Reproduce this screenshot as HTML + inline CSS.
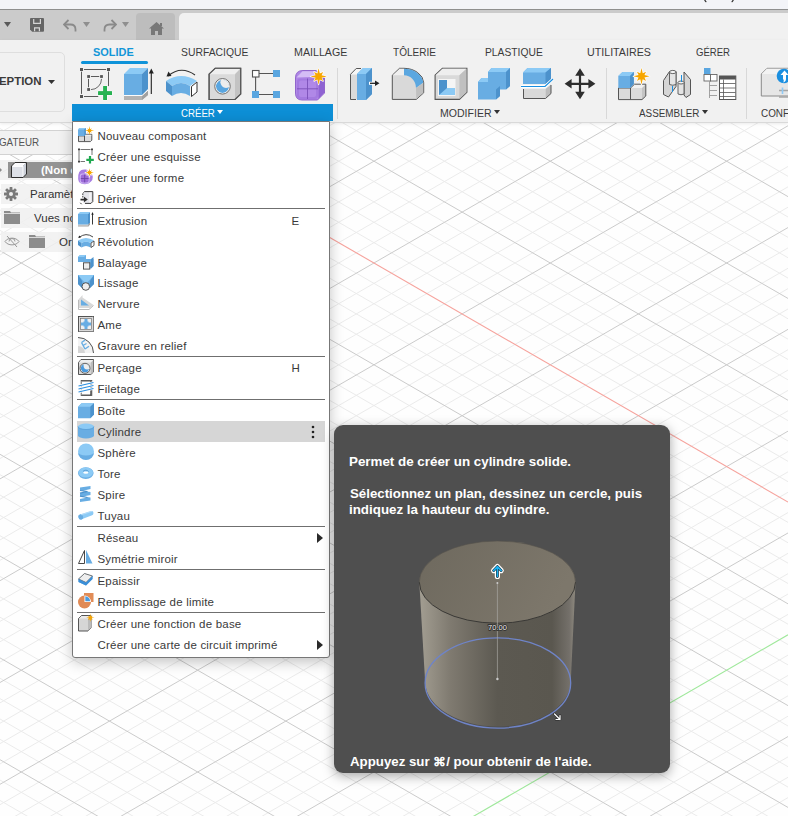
<!DOCTYPE html>
<html><head><meta charset="utf-8"><style>
*{margin:0;padding:0;box-sizing:border-box}
html,body{width:788px;height:816px;overflow:hidden;background:#fefefe;font-family:"Liberation Sans",sans-serif;position:relative}
.a{position:absolute}
#topstrip{left:0;top:0;width:788px;height:9px;background:#f3f4f8;overflow:hidden}
#topline{left:0;top:9px;width:788px;height:1px;background:#8f8f8f}
#toolbar{left:0;top:10px;width:788px;height:30px;background:#cbcbcb}
#hometab{left:136px;top:13px;width:39px;height:27px;background:#bdbdbd;border-radius:4px 4px 0 0}
#doctab{left:179px;top:13px;width:620px;height:27px;background:#f1f1f1;border-radius:5px 0 0 0}
#ribbon{left:0;top:40px;width:788px;height:83px;background:#f1f1f1;border-bottom:1px solid #d9d9d9;box-shadow:0 1px 3px rgba(0,0,0,0.08)}
.tab{position:absolute;top:47px;font-size:11.5px;color:#3c3c3c;white-space:nowrap;line-height:12px;transform-origin:0 0}
.sep{position:absolute;width:1px;background:#d8d8d8}
.grp{position:absolute;top:106px;font-size:11px;color:#3c3c3c;white-space:nowrap;line-height:12px}
.ico{position:absolute}
/* browser */
.brow{position:absolute;background:rgba(240,240,240,0.85)}
/* menu */
#menu{left:72px;top:121px;width:258px;height:537px;background:#ffffff;border:1px solid #777;box-shadow:0 4px 14px rgba(0,0,0,0.24);border-radius:0 0 3px 3px}
.mi{position:absolute;height:21px;font-size:11.5px;letter-spacing:0.2px;color:#3a3a3a;line-height:21px;white-space:nowrap}
.msep{position:absolute;left:77px;width:248px;height:1px;background:#6f6f6f}
.mic{position:absolute;left:5px;width:16px;height:16px}
#tip{left:334px;top:425px;width:336px;height:348px;background:#4f4f4f;border-radius:9px;box-shadow:0 3px 12px rgba(0,0,0,0.35)}
.tt{position:absolute;left:16px;font-size:13px;font-weight:bold;color:#fff;white-space:nowrap;line-height:16px}
.t{position:absolute;white-space:nowrap;transform-origin:0 0}

</style></head><body>
<svg width="788" height="816" viewBox="0 0 788 816" style="position:absolute;left:0;top:0">
<path d="M0 -339.74L788 115.21M0 -319.38L788 135.57M0 -299.02L788 155.93M0 -278.66L788 176.29M0 -237.94L788 217.01M0 -217.58L788 237.37M0 -197.22L788 257.73M0 -176.86L788 278.09M0 -136.14L788 318.81M0 -115.78L788 339.17M0 -95.42L788 359.53M0 -75.06L788 379.89M0 -34.34L788 420.61M0 -13.98L788 440.97M0 6.38L788 461.33M0 26.74L788 481.69M0 67.46L788 522.41M0 87.82L788 542.77M0 108.18L788 563.13M0 128.54L788 583.49M0 169.26L788 624.21M0 189.62L788 644.57M0 209.98L788 664.93M0 230.34L788 685.29M0 271.06L788 726.01M0 291.42L788 746.37M0 311.78L788 766.73M0 332.14L788 787.09M0 372.86L788 827.81M0 393.22L788 848.17M0 413.58L788 868.53M0 433.94L788 888.89M0 474.66L788 929.61M0 495.02L788 949.97M0 515.38L788 970.33M0 535.74L788 990.69M0 576.46L788 1031.41M0 596.82L788 1051.77M0 617.18L788 1072.13M0 637.54L788 1092.49M0 678.26L788 1133.21M0 698.62L788 1153.57M0 718.98L788 1173.93M0 739.34L788 1194.29M0 780.06L788 1235.01M0 800.42L788 1255.37M0 112.42L788 -342.53M0 132.78L788 -322.17M0 153.14L788 -301.81M0 193.86L788 -261.09M0 214.22L788 -240.73M0 234.58L788 -220.37M0 254.94L788 -200.01M0 295.66L788 -159.29M0 316.02L788 -138.93M0 336.38L788 -118.57M0 356.74L788 -98.21M0 397.46L788 -57.49M0 417.82L788 -37.13M0 438.18L788 -16.77M0 458.54L788 3.59M0 499.26L788 44.31M0 519.62L788 64.67M0 539.98L788 85.03M0 560.34L788 105.39M0 601.06L788 146.11M0 621.42L788 166.47M0 641.78L788 186.83M0 662.14L788 207.19M0 702.86L788 247.91M0 723.22L788 268.27M0 743.58L788 288.63M0 763.94L788 308.99M0 804.66L788 349.71M0 825.02L788 370.07M0 845.38L788 390.43M0 865.74L788 410.79M0 906.46L788 451.51M0 926.82L788 471.87M0 947.18L788 492.23M0 967.54L788 512.59M0 1008.26L788 553.31M0 1028.62L788 573.67M0 1048.98L788 594.03M0 1069.34L788 614.39M0 1110.06L788 655.11M0 1130.42L788 675.47M0 1150.78L788 695.83M0 1171.14L788 716.19M0 1211.86L788 756.91M0 1232.22L788 777.27M0 1252.58L788 797.63" stroke="#ebebeb" stroke-width="1" fill="none"/>
<path d="M0 -258.30L788 196.65M0 -156.50L788 298.45M0 -54.70L788 400.25M0 148.90L788 603.85M0 250.70L788 705.65M0 352.50L788 807.45M0 454.30L788 909.25M0 556.10L788 1011.05M0 657.90L788 1112.85M0 759.70L788 1214.65M0 173.50L788 -281.45M0 275.30L788 -179.65M0 377.10L788 -77.85M0 478.90L788 23.95M0 580.70L788 125.75M0 682.50L788 227.55M0 784.30L788 329.35M0 886.10L788 431.15M0 987.90L788 532.95M0 1191.50L788 736.55" stroke="#cbcbcb" stroke-width="1" fill="none"/>
<path d="M0 47.10L788 502.05" stroke="#f6a29c" stroke-width="1.1" fill="none"/>
<path d="M0 1089.70L788 634.75" stroke="#9fe89b" stroke-width="1.1" fill="none"/>
</svg>
<div id="topstrip" class="a"><svg class="ico" style="left:700px;top:0" width="40" height="4"><path d="M4.8 0Q5 1.2 6.3 1.8" stroke="#222" stroke-width="1.3" fill="none"/><path d="M33.2 0Q33 1.2 31.7 1.8" stroke="#222" stroke-width="1.3" fill="none"/></svg></div>
<div id="topline" class="a"></div>
<div id="toolbar" class="a"></div>
<div id="hometab" class="a"></div>
<div id="doctab" class="a"></div>
<div id="ribbon" class="a"></div>
<svg class="ico" style="left:4px;top:22px" width="8" height="5"><path d="M0 0H7L3.5 5Z" fill="#5a5a5a"/></svg>
<svg class="ico" style="left:30px;top:18px" width="14" height="14" viewBox="0 0 14 14"><path d="M1 0H13Q14 0 14 1V12.7Q14 13.7 13 13.7H2.2L0 11.5V1Q0 0 1 0Z" fill="#656565"/><path d="M3.7 0.9V5.4H10.4V0.9" fill="none" stroke="#d6d6d6" stroke-width="1.2"/><path d="M4.6 13.2V9.8H9.4V13.2" fill="none" stroke="#d6d6d6" stroke-width="1.2"/></svg>
<svg class="ico" style="left:63px;top:19px" width="14" height="13" viewBox="0 0 14 13"><path d="M5.5 1L1 5.5L5.5 10" fill="none" stroke="#8a8a8a" stroke-width="1.8" stroke-linejoin="miter"/><path d="M1.5 5.5H7.5Q12.5 5.5 12.5 10.5V12.5" fill="none" stroke="#8a8a8a" stroke-width="1.8"/></svg>
<svg class="ico" style="left:83px;top:22px" width="8" height="5"><path d="M0 0H7L3.5 5Z" fill="#8f8f8f"/></svg>
<svg class="ico" style="left:103px;top:19px" width="14" height="13" viewBox="0 0 14 13"><path d="M8.5 1L13 5.5L8.5 10" fill="none" stroke="#8a8a8a" stroke-width="1.8"/><path d="M12.5 5.5H6.5Q1.5 5.5 1.5 10.5V12.5" fill="none" stroke="#8a8a8a" stroke-width="1.8"/></svg>
<svg class="ico" style="left:122px;top:22px" width="8" height="5"><path d="M0 0H7L3.5 5Z" fill="#8f8f8f"/></svg>
<svg class="ico" style="left:149px;top:22px" width="15" height="13" viewBox="0 0 15 13"><path d="M7.5 0L15 6.5H13V13H9V9H6V13H2V6.5H0Z" fill="#787878"/><rect x="11" y="1" width="2" height="3" fill="#787878"/></svg>

<div class="t" style="left:92.87px;top:46.16px;font-size:11.63px;line-height:11.63px;font-weight:bold;color:#1196d8;transform:scaleX(0.941);">SOLIDE</div>
<div class="t" style="left:180.63px;top:46.16px;font-size:11.63px;line-height:11.63px;color:#3a3a3a;transform:scaleX(0.892);">SURFACIQUE</div>
<div class="t" style="left:293.95px;top:46.16px;font-size:11.63px;line-height:11.63px;color:#3a3a3a;transform:scaleX(0.918);">MAILLAGE</div>
<div class="t" style="left:392.60px;top:46.16px;font-size:11.63px;line-height:11.63px;color:#3a3a3a;transform:scaleX(0.863);">TÔLERIE</div>
<div class="t" style="left:484.78px;top:46.16px;font-size:11.63px;line-height:11.63px;color:#3a3a3a;transform:scaleX(0.885);">PLASTIQUE</div>
<div class="t" style="left:587.30px;top:46.16px;font-size:11.63px;line-height:11.63px;color:#3a3a3a;transform:scaleX(0.919);">UTILITAIRES</div>
<div class="t" style="left:695.62px;top:46.16px;font-size:11.63px;line-height:11.63px;color:#3a3a3a;transform:scaleX(0.823);">GÉRER</div>
<div class="a" style="left:81px;top:61px;width:67px;height:3px;background:#0f93d9;border-radius:1.5px"></div>
<div class="a" style="left:-10px;top:52px;width:75px;height:60px;border:1px solid #dedede;border-radius:5px"></div>
<div class="t" style="left:-0.74px;top:75.16px;font-size:11.63px;line-height:11.63px;font-weight:bold;color:#3a3a3a;transform:scaleX(0.982);">EPTION</div>
<svg class="ico" style="left:48px;top:80px" width="7" height="4"><path d="M0 0H7L3.5 4Z" fill="#333"/></svg>
<div class="a" style="left:72px;top:104px;width:261px;height:17px;background:#0d8fd6"></div>
<div class="t" style="left:180.52px;top:108.84px;font-size:10.47px;line-height:10.47px;color:#fff;transform:scaleX(0.923);">CRÉER</div>
<div class="t" style="left:439.76px;top:108.84px;font-size:10.47px;line-height:10.47px;color:#3a3a3a;transform:scaleX(1.008);">MODIFIER</div>
<div class="t" style="left:639.10px;top:108.84px;font-size:10.47px;line-height:10.47px;color:#3a3a3a;transform:scaleX(0.944);">ASSEMBLER</div>
<div class="t" style="left:760.51px;top:108.84px;font-size:10.47px;line-height:10.47px;color:#3a3a3a;transform:scaleX(0.944);">CONFIGURER</div>
<svg class="ico" style="left:217px;top:110px" width="6" height="4"><path d="M0 0H6L3 4Z" fill="#fff"/></svg>
<svg class="ico" style="left:494.3px;top:110px" width="6" height="4"><path d="M0 0H6L3 4Z" fill="#333"/></svg>
<svg class="ico" style="left:702px;top:110px" width="6" height="4"><path d="M0 0H6L3 4Z" fill="#333"/></svg>
<div class="sep" style="left:337px;top:68px;height:51px"></div>
<div class="sep" style="left:606px;top:68px;height:51px"></div>
<div class="sep" style="left:746px;top:68px;height:51px"></div>
<svg class="ico" style="left:0;top:40px" width="788" height="82" viewBox="0 40 788 82">

<!-- sketch -->
<g fill="#555">
<rect x="80" y="68" width="3" height="3"/><rect x="107" y="68" width="3" height="3"/><rect x="80" y="95" width="3" height="3"/>
<rect x="87.2" y="75.1" width="2.8" height="2.8"/><rect x="100.1" y="75.1" width="2.8" height="2.8"/><rect x="87.2" y="88.1" width="2.8" height="2.8"/>
</g>
<path d="M84.4 69.5H105.7M81.5 72V93.5M108.5 72V85.7M84.4 96.5H97.8M91.3 76.5H98.8M88.5 79.3V86.8" stroke="#5a5a5a" stroke-width="1" fill="none" stroke-linecap="round"/>
<path d="M101.5 79.3A10.2 10.2 0 0 1 91.3 89.6" stroke="#5a5a5a" stroke-width="0.9" fill="none" stroke-linecap="round"/>
<path d="M103.2 86H107V91.2H112V95H107V99.9H103.2V95H98.1V91.2H103.2Z" fill="#23ae4f" stroke="#fff" stroke-width="0.8" stroke-linejoin="miter" paint-order="stroke"/>
<path d="M103.6 86.4H106.6V91.6H111.6V94.6H106.6V99.5H103.6V94.6H98.5V91.6H103.6Z" fill="#27b352"/>
<!-- extrude -->
<path d="M124 96H142L148 90.5V95L142 100H124Z" fill="#b3b3b3"/>
<path d="M142 96L148 91V95L142 100Z" fill="#a0a0a0"/><path d="M124 95.3H142L148 89.8" stroke="#fff" stroke-width="1" fill="none"/>
<path d="M124 74L130 68H148L142 74Z" fill="#8ccaf5"/>
<path d="M124 74H142V95H124Z" fill="#68ade3"/>
<path d="M142 74L148 68V89L142 95Z" fill="#4c92cc"/>
<path d="M151.3 71V94" stroke="#222" stroke-width="1.1"/><path d="M148.8 73.5L151.3 68.5L153.8 73.5Z" fill="#222"/>
<!-- revolve -->
<path d="M168 76Q181 65 195 75" fill="none" stroke="#333" stroke-width="1.1"/><path d="M166.5 76.5L168.5 71.5L171.5 76Z" fill="#222"/>
<path d="M166 81Q181 71 197 81L190 86Q181 80 172 86Z" fill="#8ccaf5"/>
<path d="M172 86Q181 80 190 86V96Q181 90 172 96Z" fill="#68ade3"/>
<path d="M166 81L172 86V96L166 91Z" fill="#4c92cc"/>
<path d="M191.5 86.5L197 82V92L191.5 96.5Z" fill="#fff" stroke="#333" stroke-width="1"/>
<!-- hole -->
<path d="M209.1 74.2L215.2 68.3H240.7V94L235 99.5H209.1Z" fill="#dadada" stroke="#555" stroke-width="1.1"/>
<path d="M209.5 74.2L215.2 68.7H240.3L235 74.2Z" fill="#efefef"/>
<path d="M235 74.2L240.3 68.7V94L235 99.1Z" fill="#c3c3c3"/>
<path d="M209.1 74.2L215.2 68.3H240.7V94L235 99.5H209.1Z" fill="none" stroke="#555" stroke-width="1.1"/>
<circle cx="222.5" cy="86.3" r="7.8" fill="#eee" stroke="#666" stroke-width="0.9"/>
<clipPath id="hc"><circle cx="222.5" cy="86.3" r="6.6"/></clipPath><g clip-path="url(#hc)"><circle cx="222.5" cy="86.3" r="6.6" fill="#5aa6e0"/><circle cx="226" cy="82.3" r="5.6" fill="#eeeeee"/></g>
<!-- pattern -->
<path d="M259 73.5H273M255.6 77V91M259 94.5H273" stroke="#555" stroke-width="1.1"/>
<rect x="252.5" y="70.5" width="6.5" height="6.5" fill="#fff" stroke="#555" stroke-width="1.1"/>
<rect x="273" y="70" width="7" height="7" fill="#5aa6e0"/><rect x="252" y="91" width="7" height="7" fill="#5aa6e0"/><rect x="273" y="91" width="7" height="7" fill="#5aa6e0"/>
<!-- form -->
<path d="M295.5 78Q295.5 70.5 303 70.5H316L324.5 78V93L317.5 100H302Q295.5 100 295.5 93Z" fill="#b088e6" stroke="#8a5cc8" stroke-width="0.9"/>
<path d="M296.5 77.5L302.5 71.3H316L321.5 76.5Z" fill="#d4bdf5"/>
<path d="M318.5 80.5L324 76.5V92.8L318.5 99Z" fill="#8f63d2"/>
<rect x="297" y="78.5" width="21" height="20.5" rx="3" fill="#a47ae0"/>
<rect x="299" y="80.5" width="17" height="16.5" rx="2" fill="#b58fea" opacity="0.7"/>
<path d="M307.5 78.5V99M297 88.8H318" stroke="#7a50b8" stroke-width="0.9"/>
<g transform="translate(318.6 76.5)"><path d="M0.00 -8.20L1.22 -2.96L4.60 -4.60L2.96 -1.22L8.20 0.00L2.96 1.22L4.60 4.60L1.22 2.96L0.00 8.20L-1.22 2.96L-4.60 4.60L-2.96 1.22L-8.20 0.00L-2.96 -1.22L-4.60 -4.60L-1.22 -2.96Z" fill="#f7a600" stroke="#fff" stroke-width="1.2" stroke-linejoin="round" paint-order="stroke"/></g>
<!-- press pull -->
<rect x="351" y="74.5" width="6" height="24.7" fill="#dadada"/><path d="M351 74.3L356.4 69H361L357 74.3Z" fill="#f6f6f6"/><path d="M356 99.5H350.5V74.3L356.2 68.5H361" stroke="#555" stroke-width="1" fill="none"/>
<path d="M357 74L363 68H372V94L366 100H357Z" fill="#68ade3"/>
<path d="M357 74L363 68H372L366 74Z" fill="#8ccaf5"/>
<path d="M366 74L372 68V94L366 100Z" fill="#4c92cc"/>
<path d="M369 83.3H376" stroke="#fff" stroke-width="3"/>
<path d="M370 83.3H376" stroke="#222" stroke-width="1.3"/><path d="M375 80.5L379.5 83.3L375 86Z" fill="#222"/>
<!-- fillet -->
<path d="M392.3 75.2L399.5 68.3H404A20 15 0 0 1 423.7 82.7V92.8L416.3 99.4H392.3Z" fill="#d9d9d9" stroke="#555" stroke-width="1"/>
<path d="M392.8 75.2L399.7 68.8H404V75.2Z" fill="#efefef"/>
<path d="M404 68.8A19.5 14.5 0 0 1 423.2 82.7L416 88A12 12.8 0 0 0 404 75.2Z" fill="#5ba7e0"/>
<path d="M416 88L423.2 83V92.8L416.3 99Z" fill="#c0c0c0"/>
<!-- shell -->
<path d="M435.1 75.2L442.4 68.3H466.9V92.3L459.4 99.4H435.1Z" fill="#d9d9d9" stroke="#555" stroke-width="1.1"/>
<path d="M435.6 75.2L442.4 68.8H466.4L459.4 75.2Z" fill="#eeeeee"/>
<path d="M459.4 75.2L466.4 68.8V92.3L459.4 99Z" fill="#c0c0c0"/>
<rect x="438" y="79" width="17.5" height="17" fill="#f5f5f5"/>
<path d="M439 80H447V88H455V95H439Z" fill="#8ccaf5"/><path d="M439 80H447V88L439 95Z" fill="#4c92cc"/>
<!-- combine -->
<path d="M488 72L491.5 68H510V86L506 89.6H488Z" fill="#68ade3"/>
<path d="M488 72L491.5 68H510L506 72Z" fill="#8ccaf5"/><path d="M506 72L510 68V86L506 89.6Z" fill="#4c92cc"/>
<path d="M478 82L481.5 78H500V96L496 99.5H478Z" fill="#68ade3"/>
<path d="M478 82L481.5 78H488V82Z" fill="#8ccaf5"/><path d="M496 89.6L500 86V96L496 99.5Z" fill="#4c92cc"/>
<!-- split -->
<path d="M523 72.5L527.5 68H551V79.5L545.5 84H523Z" fill="#68ade3"/>
<path d="M523 72.5L527.5 68H551L545.5 72.5Z" fill="#8ccaf5"/><path d="M545.5 72.5L551 68V79.5L545.5 84Z" fill="#4c92cc"/>
<path d="M523.5 89H545.5V98.5H523.5Z" fill="#d9d9d9"/><path d="M545.5 89L551 84.5V93.5L545.5 98.5Z" fill="#bdbdbd"/>
<path d="M523.5 89V98.5H545.5L551 93.5V85" stroke="#555" stroke-width="1" fill="none"/>
<path d="M521 86.5H545L553 79" stroke="#fff" stroke-width="2.8" fill="none"/>
<path d="M521 86.5H545L553 79" stroke="#1a8fe0" stroke-width="1.2" fill="none"/>
<!-- move -->
<path d="M580 75V92.5M571 83.8H589" stroke="#2e2e2e" stroke-width="2.2"/>
<path d="M580 68.3L584.8 75.8H575.2Z M580 99.3L584.8 91.8H575.2Z M564.6 83.8L571.6 79V88.6Z M595.4 83.8L588.4 79V88.6Z" fill="#2e2e2e"/>
<!-- new component -->
<path d="M630.5 88H642V99.6H630.5Z" fill="#dadada"/><path d="M630.5 88L634.5 84.2H645.8L642 88Z" fill="#f0f0f0"/><path d="M642 88L645.8 84.2V96L642 99.6Z" fill="#c4c4c4"/>
<rect x="618.5" y="88" width="12" height="11.6" fill="#dadada"/>
<path d="M618.5 88V99.6H642L645.8 96V84.2H634.5L630.5 88M618.5 88H630.5V99.6" fill="none" stroke="#555" stroke-width="1"/>
<path d="M618.3 76L622.5 72H633.8V84L630 88H618.3Z" fill="#68ade3"/>
<path d="M618.3 76L622.5 72H633.8L630 76Z" fill="#8ccaf5"/><path d="M630 76L633.8 72V84L630 88Z" fill="#4c92cc"/>
<g transform="translate(641.5 76.3)"><path d="M0.00 -8.20L1.22 -2.96L4.60 -4.60L2.96 -1.22L8.20 0.00L2.96 1.22L4.60 4.60L1.22 2.96L0.00 8.20L-1.22 2.96L-4.60 4.60L-2.96 1.22L-8.20 0.00L-2.96 -1.22L-4.60 -4.60L-1.22 -2.96Z" fill="#f7a600" stroke="#fff" stroke-width="1.2" stroke-linejoin="round" paint-order="stroke"/></g>
<!-- joint -->
<path d="M663.5 80.5L669.5 71.5H676V86.5L668.5 97L663.5 94.5Z" fill="#d5d5d5" stroke="#555" stroke-width="1" stroke-linejoin="round"/>
<path d="M669.5 72V84.5Q672.8 86 676 84.5V72Z" fill="#e4e4e4" stroke="#555" stroke-width="0.9"/>
<ellipse cx="672.8" cy="72" rx="3.3" ry="1.6" fill="#f5f5f5" stroke="#555" stroke-width="0.9"/>
<path d="M672.5 86V92" stroke="#1a8fe0" stroke-width="1"/>
<path d="M684 72L690.5 79.5V94.5L686 97.5L684 95Z" fill="#d5d5d5" stroke="#555" stroke-width="1" stroke-linejoin="round"/>
<path d="M678 82.5V94Q681 95.5 684 94V82.5Z" fill="#e4e4e4" stroke="#555" stroke-width="0.9"/>
<ellipse cx="681" cy="82.5" rx="3" ry="1.5" fill="#f5f5f5" stroke="#555" stroke-width="0.9"/>
<path d="M681.5 75V82" stroke="#1a8fe0" stroke-width="1"/>
<!-- table -->
<rect x="704" y="68" width="6.5" height="6.5" fill="#5aa6e0"/>
<rect x="704" y="74.5" width="6.5" height="6.5" fill="#fff" stroke="#666" stroke-width="0.9"/><rect x="710.5" y="74.5" width="6.5" height="6.5" fill="#fff" stroke="#666" stroke-width="0.9"/>
<path d="M709.5 81V98M709.5 85.5H717M709.5 90.5H717M709.5 95.5H717" stroke="#999" stroke-width="0.9"/>
<rect x="719.5" y="76" width="16.3" height="23.5" fill="#fff" stroke="#555" stroke-width="1"/>
<rect x="719.5" y="76" width="16.3" height="3.5" fill="#555"/>
<path d="M720 83.5H735.5M720 88H735.5M720 92.5H735.5M720 96.5H735.5M723.5 79.5V99" stroke="#555" stroke-width="0.8"/>
<!-- configure -->
<path d="M761.3 74L767 68.3H790V96H761.3Z" fill="#e6e6e6" stroke="#8a8a8a" stroke-width="1"/>
<path d="M761.8 74L767 68.8H790V74Z" fill="#f3f3f3"/>
<path d="M779 90.5H790M779 97H790" stroke="#a5a5a5" stroke-width="1.3"/><path d="M782.5 87.5V94" stroke="#8fcaf5" stroke-width="1.6"/>
<circle cx="784" cy="76" r="7.3" fill="#1a8fe0"/>
<path d="M784.5 70.5L788.5 75H786V79Q786 81.5 783 82.5Q784.5 80.5 783 79V75H780.5Z" fill="#fff"/>
</svg>

<div class="a" style="left:0;top:130px;width:72px;height:25px;background:#f2f2f2;border-top:1px solid #d2d2d2;border-bottom:1px solid #d2d2d2"></div>
<div class="a" style="left:-1px;top:138px;font-size:10px;line-height:10px;color:#555;white-space:nowrap;transform:scaleX(0.98);transform-origin:0 0">GATEUR</div>
<div class="brow" style="left:0;top:160px;width:72px;height:20px"></div>
<div class="a" style="left:8px;top:162px;width:64px;height:16px;background:#939393"></div>
<svg class="ico" style="left:0;top:166px" width="4" height="8"><path d="M-2 0L2 4L-2 8Z" fill="#8a8a8a"/></svg>
<svg class="ico" style="left:11px;top:162px" width="17" height="17" viewBox="0 0 17 17"><path d="M0.5 4L4 0.5H15.5L12 4Z" fill="#fbfbfd"/><path d="M0.5 4H12V15.5H0.5Z" fill="#dde0e7"/><path d="M12 4L15.5 0.5V12L12 15.5Z" fill="#cdd1da"/><path d="M1.5 4.5H12V15" fill="none" stroke="#fff" stroke-width="0.9"/><path d="M0.5 4L4 0.5H15.5V12L12 15.5H0.5Z" fill="none" stroke="#2e2e2e" stroke-width="1" stroke-linejoin="round"/></svg>
<div class="a" style="left:41px;top:164px;font-size:11.5px;line-height:12px;font-weight:bold;color:#fff;white-space:nowrap">(Non enregistré)</div>
<div class="brow" style="left:1px;top:184px;width:71px;height:20px"></div>
<svg class="ico" style="left:4px;top:187px" width="14" height="14" viewBox="0 0 14 14"><g fill="#7a7a7a"><circle cx="7" cy="7" r="4.6"/><rect x="5.6" y="0" width="2.8" height="14" rx="0.5"/><rect x="0" y="5.6" width="14" height="2.8" rx="0.5"/><rect x="5.6" y="0" width="2.8" height="14" rx="0.5" transform="rotate(45 7 7)"/><rect x="5.6" y="0" width="2.8" height="14" rx="0.5" transform="rotate(-45 7 7)"/></g><circle cx="7" cy="7" r="2" fill="#f0f0f0"/></svg>
<div class="a" style="left:30px;top:188px;font-size:11.5px;line-height:12px;color:#333;white-space:nowrap">Paramètres</div>
<div class="brow" style="left:1px;top:208px;width:71px;height:20px"></div>
<svg class="ico" style="left:4px;top:211px" width="16" height="13" viewBox="0 0 16 13"><path d="M0 0H6L7 1.5H16V13H0Z" fill="#8c8c8c"/><path d="M0 2.5H16" stroke="#f0f0f0" stroke-width="0.8"/></svg>
<div class="a" style="left:34px;top:212px;font-size:11.5px;line-height:12px;color:#333;white-space:nowrap">Vues nommées</div>
<div class="brow" style="left:1px;top:232px;width:71px;height:20px"></div>
<svg class="ico" style="left:4px;top:235px" width="16" height="13" viewBox="0 0 16 13"><path d="M1 6.5C4 2 12 2 15 6.5C12 11 4 11 1 6.5Z" fill="none" stroke="#999" stroke-width="1"/><path d="M5 6.5A3 3 0 0 1 11 6.5" fill="none" stroke="#999" stroke-width="1"/><path d="M3 1L13 12" stroke="#999" stroke-width="1"/></svg>
<svg class="ico" style="left:29px;top:235px" width="16" height="13" viewBox="0 0 16 13"><path d="M0 0H6L7 1.5H16V13H0Z" fill="#8c8c8c"/><path d="M0 2.5H16" stroke="#f0f0f0" stroke-width="0.8"/></svg>
<div class="a" style="left:59px;top:236px;font-size:11.5px;line-height:12px;color:#333;white-space:nowrap">Origine</div>

<div id="menu" class="a"></div>
<div class="mi" style="left:97.5px;top:125.8px">Nouveau composant</div>
<svg class="ico" style="overflow:visible;left:78px;top:126.9px" width="16" height="16" viewBox="0 0 16 16"><path d="M0.5 8.9H6.5V14.6H0.5Z" fill="#dcdcdc" stroke="#4a4a4a" stroke-width="0.9"/><path d="M6.5 7.3H13.8V13.2L12.4 14.6H6.5Z" fill="#dcdcdc" stroke="#4a4a4a" stroke-width="0.9"/><path d="M7 7.8H13.3V8.8H7Z" fill="#f2f2f2"/><path d="M0 2.6L1.5 1.1H7.8V7.4L6.4 8.9H0Z" fill="#68ade3"/><path d="M0 2.6L1.5 1.1H7.8L6.3 2.6Z" fill="#8ccaf5"/><path d="M6.4 2.6L7.8 1.1V7.4L6.4 8.9Z" fill="#4c92cc"/><path d="M11.50 -1.00L12.07 2.21L13.76 1.34L12.89 3.03L16.10 3.60L12.89 4.17L13.76 5.86L12.07 4.99L11.50 8.20L10.93 4.99L9.24 5.86L10.11 4.17L6.90 3.60L10.11 3.03L9.24 1.34L10.93 2.21Z" fill="#f7a600"/></svg>
<div class="mi" style="left:97.5px;top:146.7px">Créer une esquisse</div>
<svg class="ico" style="overflow:visible;left:78px;top:147.8px" width="16" height="16" viewBox="0 0 16 16"><g fill="#444"><rect x="0" y="0.5" width="2" height="2"/><rect x="13" y="0.5" width="2" height="2"/><rect x="0" y="12.5" width="2" height="2"/></g><path d="M2.5 1.5H12.5M1 3V12M2.5 13.5H7M14 3V7" stroke="#666" stroke-width="0.9" stroke-dasharray="10 0"/><path d="M12 8V15.5M8.3 11.8H15.8" stroke="#1fa84f" stroke-width="2.2"/></svg>
<div class="mi" style="left:97.5px;top:167.6px">Créer une forme</div>
<svg class="ico" style="overflow:visible;left:78px;top:168.7px" width="16" height="16" viewBox="0 0 16 16"><path d="M3 1.2Q5 0.2 8 0.6L11 1.5Q14.5 4 14.8 8Q14.8 11 13 12.5Q11 15 7 15.2Q2.5 15.2 0.8 12.5Q-0.2 10 0.3 6Q0.8 2.5 3 1.2Z" fill="#a77de2"/><rect x="1.8" y="4.6" width="9.8" height="9.8" rx="2.6" fill="#cdb3f3"/><rect x="2.8" y="5.6" width="7.8" height="7.8" rx="2" fill="#9c6cd8"/><path d="M6.7 5.6V13.4M2.8 9.5H10.6" stroke="#6c44a6" stroke-width="0.9"/><path transform="translate(11.5 3.6) scale(0.54)" d="M0.00 -8.00L1.07 -2.59L4.60 -4.60L2.59 -1.07L8.00 0.00L2.59 1.07L4.60 4.60L1.07 2.59L0.00 8.00L-1.07 2.59L-4.60 4.60L-2.59 1.07L-8.00 0.00L-2.59 -1.07L-4.60 -4.60L-1.07 -2.59Z" fill="#f7a600" stroke="#fff" stroke-width="2" paint-order="stroke" stroke-linejoin="round"/></svg>
<div class="mi" style="left:97.5px;top:188.5px">Dériver</div>
<svg class="ico" style="overflow:visible;left:78px;top:189.6px" width="16" height="16" viewBox="0 0 16 16"><path d="M4.8 3.3L6.5 1.6H14.8V11.5L13 13.4H6L4.8 12Z" fill="#e4e5ea"/><path d="M12 1.6V13.4" stroke="#f3f3f5" stroke-width="2"/><path d="M6.5 1.6H14.8V11.5L13 13.4H7" fill="none" stroke="#333" stroke-width="0.95"/><path d="M6.5 1.6L4.8 3.3V7.5" fill="none" stroke="#333" stroke-width="0.95" stroke-dasharray="1.6 0.9"/><path d="M2.5 8.8H6V6.8L9.8 9.5L6 12.2V10.4H2.5Z" fill="#2e2e2e"/><path d="M2.3 12.8L3.6 14.2" stroke="#333" stroke-width="1"/></svg>
<div class="msep" style="top:208.2px"></div>
<div class="mi" style="left:97.5px;top:210.7px">Extrusion</div>
<svg class="ico" style="overflow:visible;left:78px;top:211.8px" width="16" height="16" viewBox="0 0 16 16"><path d="M0 12.5H10L12 10.5V12.5L10 14.7H0Z" fill="#c2c2c2"/><path d="M10 12.5L12 10.5V12.5L10 14.7Z" fill="#a8a8a8"/><path d="M0 2L2 0H12L10 2Z" fill="#8ccaf5"/><path d="M0 2H10V12.5H0Z" fill="#68ade3"/><path d="M10 2L12 0V10.5L10 12.5Z" fill="#4c92cc"/><path d="M14.5 2V12.5" stroke="#222" stroke-width="0.9"/><path d="M13.3 2.8L14.5 0L15.7 2.8Z" fill="#222"/></svg>
<div class="mi" style="left:291.5px;top:210.7px">E</div>
<div class="mi" style="left:97.5px;top:231.6px">Révolution</div>
<svg class="ico" style="overflow:visible;left:78px;top:232.7px" width="16" height="16" viewBox="0 0 16 16"><path d="M1 4.5Q8 -1 15 4" fill="none" stroke="#333" stroke-width="0.9"/><path d="M0 4.8L1.5 2.5L3 4.5Z" fill="#222"/><path d="M0 7.5Q8 2.5 16 7.5L12.5 10Q8 7.5 3.5 10Z" fill="#8ccaf5"/><path d="M3.5 10Q8 7.5 12.5 10V14.5Q8 11.5 3.5 14.5Z" fill="#68ade3"/><path d="M0 7.5L3.5 10V14.5L0 12Z" fill="#4c92cc"/><path d="M13 10L16 8V12.5L13 14.5Z" fill="#fff" stroke="#333" stroke-width="0.8"/></svg>
<div class="mi" style="left:97.5px;top:252.5px">Balayage</div>
<svg class="ico" style="overflow:visible;left:78px;top:253.6px" width="16" height="16" viewBox="0 0 16 16"><path d="M0 3L2 1H8V5H15.5V12L13 14.5H11V8H0Z" fill="#68ade3"/><path d="M0 3L2 1H8L6 3Z" fill="#8ccaf5"/><path d="M0 3H6V8H0Z" fill="#68ade3"/><path d="M13 5L15.5 3V12L13 14.5Z" fill="#4c92cc"/><rect x="5.5" y="8.8" width="6.3" height="6.3" fill="#eee" stroke="#444" stroke-width="0.9"/></svg>
<div class="mi" style="left:97.5px;top:273.4px">Lissage</div>
<svg class="ico" style="overflow:visible;left:78px;top:274.5px" width="16" height="16" viewBox="0 0 16 16"><path d="M0 0H16V9L12 13H4L0 9Z" fill="#68ade3"/><path d="M0 0H16L8 9Z" fill="#8ccaf5"/><path d="M0 0L4 6V13L0 9Z" fill="#4c92cc"/><path d="M16 0L12 6V13L16 9Z" fill="#4c92cc"/><circle cx="7.8" cy="11.5" r="3.8" fill="#eee" stroke="#444" stroke-width="0.9"/></svg>
<div class="mi" style="left:97.5px;top:294.3px">Nervure</div>
<svg class="ico" style="overflow:visible;left:78px;top:295.4px" width="16" height="16" viewBox="0 0 16 16"><path d="M0 5L4.5 0V2.5L15.5 10L12 13H0Z" fill="#d9d9d9"/><path d="M3 4.5L11 10.5H3Z" fill="#68ade3" /><path d="M0.5 5V14.5H11L15.5 10.5" fill="none" stroke="#bbb" stroke-width="1"/></svg>
<div class="mi" style="left:97.5px;top:315.2px">Ame</div>
<svg class="ico" style="overflow:visible;left:78px;top:316.3px" width="16" height="16" viewBox="0 0 16 16"><rect x="0.5" y="0.5" width="15" height="15" fill="#d9d9d9" stroke="#444" stroke-width="0.9"/><path d="M14.5 0.5L15.5 1.5V15.5H1L0.5 15" fill="none" stroke="#888" stroke-width="0.9"/><rect x="2.5" y="2.5" width="11" height="11" fill="#f0f0f0" stroke="#666" stroke-width="0.6"/><path d="M8 3V13M3 8H13" stroke="#68ade3" stroke-width="3"/><rect x="5.5" y="5.5" width="5" height="5" fill="#68ade3"/></svg>
<div class="mi" style="left:97.5px;top:336.1px">Gravure en relief</div>
<svg class="ico" style="overflow:visible;left:78px;top:337.2px" width="16" height="16" viewBox="0 0 16 16"><path d="M0 0A16 16 0 0 1 16 16H0Z" fill="#f3f3f3"/><path d="M0 9A7 7 0 0 1 7 16H0Z" fill="#d5d5d5"/><path d="M0 0.5A15.5 15.5 0 0 1 15.5 16" fill="none" stroke="#444" stroke-width="0.9"/><path d="M3.5 5.5L7 3.2M5 8.5L8.5 6.5M7 12L11 9.2M3.5 5.5L7 12" stroke="#68ade3" stroke-width="1.4" fill="none"/></svg>
<div class="msep" style="top:355.8px"></div>
<div class="mi" style="left:97.5px;top:358.3px">Perçage</div>
<svg class="ico" style="overflow:visible;left:78px;top:359.4px" width="16" height="16" viewBox="0 0 16 16"><path d="M0.5 3.5L3 0.5H15.5V13L12.8 15.5H0.5Z" fill="#dadada" stroke="#444" stroke-width="0.9"/><path d="M12.8 3.5L15.3 1V13L12.8 15.3Z" fill="#bcbcbc"/><path d="M1 3.5L3 1H15L12.8 3.5Z" fill="#efefef"/><circle cx="7" cy="9.3" r="5" fill="#eee" stroke="#444" stroke-width="0.8"/><clipPath id="hc2"><circle cx="7" cy="9.3" r="4.2"/></clipPath><g clip-path="url(#hc2)"><circle cx="7" cy="9.3" r="4.2" fill="#4a9ade"/><circle cx="9.2" cy="6.8" r="3.6" fill="#eee"/></g></svg>
<div class="mi" style="left:291.5px;top:358.3px">H</div>
<div class="mi" style="left:97.5px;top:379.2px">Filetage</div>
<svg class="ico" style="overflow:visible;left:78px;top:380.3px" width="16" height="16" viewBox="0 0 16 16"><path d="M4 1H13V15H4" fill="none" stroke="#444" stroke-width="0.9"/><path d="M13 1V15" stroke="#444" stroke-width="0.9"/><rect x="3.2" y="0.5" width="10.6" height="15" fill="none" stroke="#555" stroke-width="0.9"/><path d="M0.5 6L15.5 2.5M0.5 9L15.5 5.5M0.5 12L15.5 8.5" stroke="#fff" stroke-width="2.4"/><path d="M0.5 6L15.5 2.5M0.5 9L15.5 5.5M0.5 12L15.5 8.5" stroke="#2a8ee0" stroke-width="1.1"/></svg>
<div class="msep" style="top:398.9px"></div>
<div class="mi" style="left:97.5px;top:401.4px">Boîte</div>
<svg class="ico" style="overflow:visible;left:78px;top:402.5px" width="16" height="16" viewBox="0 0 16 16"><path d="M0 3.8L3.5 0.3H16V11.5L12.3 15.2H0Z" fill="#68ade3"/><path d="M0 3.8L3.5 0.3H16L12.3 3.8Z" fill="#8ccaf5"/><path d="M12.3 3.8L16 0.3V11.5L12.3 15.2Z" fill="#4c92cc"/></svg>
<div class="a" style="left:77px;top:420.9px;width:248px;height:21px;background:#d6d6d6"></div>
<div class="mi" style="left:97.5px;top:422.3px">Cylindre</div>
<svg class="ico" style="overflow:visible;left:78px;top:423.4px" width="16" height="16" viewBox="0 0 16 16"><path d="M0 3.5V12.5A8 3 0 0 0 16 12.5V3.5Z" fill="#68ade3"/><ellipse cx="8" cy="3.5" rx="8" ry="3" fill="#8ccaf5"/><path d="M0 3.5A8 3 0 0 0 16 3.5" fill="none" stroke="#4c92cc" stroke-width="0.6"/></svg>
<svg class="ico" style="left:311px;top:424.9px" width="4" height="14"><circle cx="2" cy="2" r="1.3" fill="#222"/><circle cx="2" cy="7" r="1.3" fill="#222"/><circle cx="2" cy="12" r="1.3" fill="#222"/></svg>
<div class="mi" style="left:97.5px;top:443.2px">Sphère</div>
<svg class="ico" style="overflow:visible;left:78px;top:444.3px" width="16" height="16" viewBox="0 0 16 16"><circle cx="8" cy="7.5" r="8" fill="#8ccaf5"/><path d="M0 8A8 3.5 0 0 0 16 8A8 8 0 0 1 0 8Z" fill="#68ade3"/></svg>
<div class="mi" style="left:97.5px;top:464.1px">Tore</div>
<svg class="ico" style="overflow:visible;left:78px;top:465.2px" width="16" height="16" viewBox="0 0 16 16"><ellipse cx="7.8" cy="8.1" rx="7.8" ry="5.8" fill="#68ade3"/><ellipse cx="7.8" cy="7.6" rx="7.3" ry="5" fill="#8ccaf5"/><ellipse cx="7.8" cy="7.6" rx="2.6" ry="1.2" fill="#fff"/><path d="M5 6.5A3 2 0 0 1 10.6 6.5" stroke="#4c92cc" stroke-width="0.8" fill="none"/></svg>
<div class="mi" style="left:97.5px;top:485.0px">Spire</div>
<svg class="ico" style="overflow:visible;left:78px;top:486.1px" width="16" height="16" viewBox="0 0 16 16"><path d="M2 1.5L12.5 0V3L5 4.8L12.5 6V9L5 10.5L12.5 11.5V14.5L2 16V13L9.5 11.5L2 10.2V7.2L9.5 5.5L2 4.5Z" fill="#68ade3"/><path d="M2 4.5L9.5 5.5L2 7.2M2 10.2L9.5 11.5" fill="none" stroke="#4c92cc" stroke-width="1.2"/></svg>
<div class="mi" style="left:97.5px;top:505.9px">Tuyau</div>
<svg class="ico" style="overflow:visible;left:78px;top:507.0px" width="16" height="16" viewBox="0 0 16 16"><path d="M2 7.5L13 4Q15.5 3.5 15.5 6Q15.5 8 13.5 8.5L3 12.5Z" fill="#8ccaf5"/><ellipse cx="2.7" cy="10" rx="2.4" ry="2.7" fill="#68ade3" transform="rotate(-20 2.7 10)"/><path d="M3 7.8L14 4.3" stroke="#c5e4fa" stroke-width="0.7"/></svg>
<div class="msep" style="top:525.6px"></div>
<div class="mi" style="left:97.5px;top:528.1px">Réseau</div>
<svg class="ico" style="left:317px;top:533.0px" width="6" height="10"><path d="M0 0L6 5L0 10Z" fill="#2a2a2a"/></svg>
<div class="mi" style="left:97.5px;top:549.0px">Symétrie miroir</div>
<svg class="ico" style="overflow:visible;left:78px;top:550.1px" width="16" height="16" viewBox="0 0 16 16"><path d="M6.5 0.5V13.5H0.5Z" fill="#fff" stroke="#333" stroke-width="0.9" stroke-linejoin="round"/><path d="M8 0V13.5H14.5Z" fill="#68ade3"/></svg>
<div class="msep" style="top:568.7px"></div>
<div class="mi" style="left:97.5px;top:571.2px">Epaissir</div>
<svg class="ico" style="overflow:visible;left:78px;top:572.3px" width="16" height="16" viewBox="0 0 16 16"><path d="M0.5 7L6.5 1.5L14.5 4V7L8 13.5L0.5 10Z" fill="#68ade3"/><path d="M0.5 7L6.5 1.5L14.5 4L8 10.5Z" fill="#eee" stroke="#666" stroke-width="0.9"/><path d="M0.5 7L8 10.5L14.5 4V7L8 13.5L0.5 10Z" fill="#3b8fd8"/></svg>
<div class="mi" style="left:97.5px;top:592.1px">Remplissage de limite</div>
<svg class="ico" style="overflow:visible;left:78px;top:593.2px" width="16" height="16" viewBox="0 0 16 16"><rect x="6" y="0" width="9.5" height="9" fill="#e18c57"/><circle cx="6.5" cy="9" r="6.5" fill="#e08a55"/><path d="M6.5 2.5A6.5 6.5 0 0 1 13 9H6.5Z" fill="#fff"/><path d="M7.3 3.3A5.7 5.7 0 0 1 12.2 8.2H7.3Z" fill="#4a9ade"/></svg>
<div class="msep" style="top:611.8px"></div>
<div class="mi" style="left:97.5px;top:614.3px">Créer une fonction de base</div>
<svg class="ico" style="overflow:visible;left:78px;top:615.4px" width="16" height="16" viewBox="0 0 16 16"><path d="M0.5 3.5L3.5 0.5H13V13L10 16H0.5Z" fill="#d6d6d6" stroke="#444" stroke-width="0.9"/><path d="M10 3.5L13 0.5V13L10 16Z" fill="#bbb"/><path d="M1 3.5L3.5 1H12.5L10 3.5Z" fill="#eaeaea"/><path transform="translate(12.3 2.8) scale(0.525)" d="M0.00 -8.00L1.07 -2.59L4.60 -4.60L2.59 -1.07L8.00 0.00L2.59 1.07L4.60 4.60L1.07 2.59L0.00 8.00L-1.07 2.59L-4.60 4.60L-2.59 1.07L-8.00 0.00L-2.59 -1.07L-4.60 -4.60L-1.07 -2.59Z" fill="#f7a400"/></svg>
<div class="mi" style="left:97.5px;top:635.2px">Créer une carte de circuit imprimé</div>
<svg class="ico" style="left:317px;top:640.1px" width="6" height="10"><path d="M0 0L6 5L0 10Z" fill="#2a2a2a"/></svg>
<div id="tip" class="a">
<svg class="ico" style="left:0;top:0" width="336" height="348" viewBox="334 425 336 348">
<defs>
<linearGradient id="body" x1="0" x2="1" y1="0" y2="0"><stop offset="0" stop-color="#a39e92"/><stop offset="0.2" stop-color="#7f7a70"/><stop offset="0.5" stop-color="#5c5951"/><stop offset="0.85" stop-color="#5a574f"/><stop offset="0.96" stop-color="#74706a"/><stop offset="1" stop-color="#8f8a7f"/></linearGradient>
<linearGradient id="topf" x1="0" x2="1" y1="0" y2="0.3">
<stop offset="0" stop-color="#6e695e"/><stop offset="1" stop-color="#7d776b"/>
</linearGradient>
</defs>
<path d="M419.3 582.1L425.2 683A72.8 45.1 0 0 0 570.7 683L575.5 582.1Z" fill="url(#body)"/>
<ellipse cx="497.4" cy="582.1" rx="78.1" ry="41.1" fill="url(#topf)"/>
<path d="M419.3 582.1A78.1 41.1 0 0 0 575.5 582.1" fill="none" stroke="#3a3936" stroke-width="1"/>
<path d="M419.3 582.1A78.1 41.1 0 0 1 575.5 582.1" fill="none" stroke="#55524b" stroke-width="0.6"/>
<ellipse cx="497.9" cy="683" rx="72.8" ry="45.1" fill="none" stroke="#6f84c8" stroke-width="1.3"/>
<path d="M497.4 583V680" stroke="#a9a7a2" stroke-width="0.7"/><text x="497.5" y="629.8" font-size="7.5" fill="#eee" stroke="#2a2a2a" stroke-width="1.6" paint-order="stroke" text-anchor="middle" font-family="Liberation Sans" font-weight="normal">70.00</text>
<circle cx="497.4" cy="583" r="1" fill="#ccc"/><circle cx="497.4" cy="679" r="1.2" fill="#ccc"/>

<g fill="none" stroke-linecap="round" stroke-linejoin="round"><path d="M497.4 576.5V567M493.6 570.6L497.4 566.6L501.2 570.6" stroke="#fff" stroke-width="5.2"/><path d="M497.4 576.5V567M493.6 570.6L497.4 566.6L501.2 570.6" stroke="#1b2a33" stroke-width="2.8"/><path d="M497.4 576.5V567M493.6 570.6L497.4 566.6L501.2 570.6" stroke="#19b0f2" stroke-width="1.6"/></g>
<g fill="none" stroke-linecap="round" stroke-linejoin="round"><path d="M554.5 714L560 719.5M560 719.5V715.5M560 719.5H556" stroke="#333" stroke-width="2.6"/><path d="M554.5 714L560 719.5M560 719.5V715.5M560 719.5H556" stroke="#fff" stroke-width="1.2"/></g>
</svg>
</div>

<div class="t" style="left:349.43px;top:456.12px;font-size:12.50px;line-height:12.50px;font-weight:bold;color:#fff;transform:scaleX(1.069);">Permet de créer un cylindre solide.</div>
<div class="t" style="left:349.90px;top:487.74px;font-size:12.35px;line-height:12.35px;font-weight:bold;color:#fff;transform:scaleX(1.075);">Sélectionnez un plan, dessinez un cercle, puis</div>
<div class="t" style="left:349.36px;top:503.54px;font-size:12.35px;line-height:12.35px;font-weight:bold;color:#fff;transform:scaleX(1.082);">indiquez la hauteur du cylindre.</div>
<div class="t" style="left:349.86px;top:756.0px;font-size:12.35px;line-height:12.35px;font-weight:bold;color:#fff;transform:scaleX(1.075);">Appuyez sur ⌘/ pour obtenir de l'aide.</div>
</body></html>
